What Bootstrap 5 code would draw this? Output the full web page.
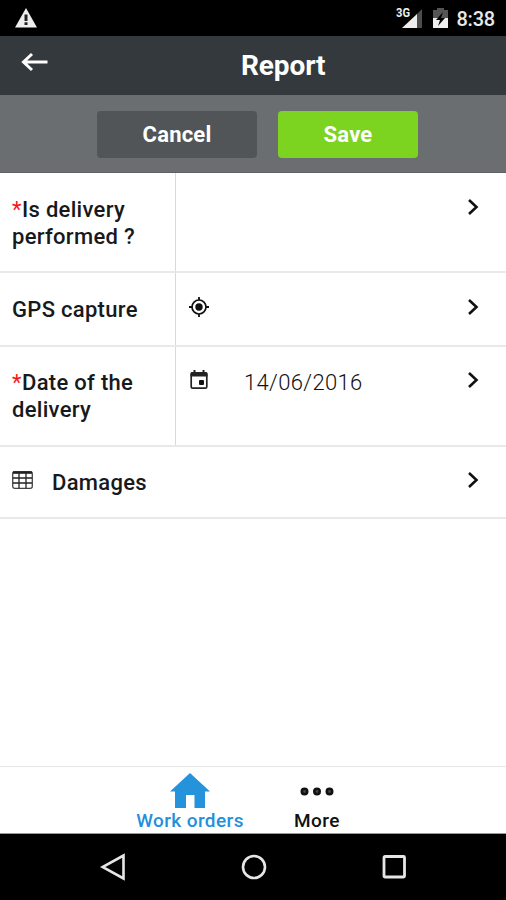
<!DOCTYPE html>
<html lang="en">
<head>
<meta charset="utf-8">
<meta name="viewport" content="width=device-width, initial-scale=1">
<title>Report</title>
<link href="https://cdn.jsdelivr.net/npm/bootstrap@5.3.0/dist/css/bootstrap.min.css" rel="stylesheet">
<style>
  body { font-family: Roboto, "Liberation Sans", sans-serif; color: #18191b; background: #fff; }
  svg { display: block; flex: none; }
  .screen { height: 900px; overflow: hidden; }
  .status-bar { height: 36px; background: #000; color: #e8e8e8; padding: 0 11px 0 15px; }
  .battery { margin-left: 10px; }
  .clock { font-size: 20px; font-weight: 500; line-height: 36px; margin-left: 8px; padding-top: 2px; letter-spacing: -.2px; }
  .title-bar { height: 59px; background: #33393d; padding: 0 0 0 21px; }
  .title-bar h1 { font-size: 28px; font-weight: 700; line-height: 58px; color: #fff; margin: 0 0 0 193px; letter-spacing: -.1px; }
  .title-bar .back { margin-bottom: 8px; }
  .action-bar { height: 78px; background: #6b6e71; border-bottom: 1px solid #5f6264; padding: 16px 0 0 97px; gap: 21px; }
  .action-bar .btn { height: 47px; padding: 0; border: 0; border-radius: 4px; font-size: 22px; font-weight: 700; line-height: 44px; color: #fff; display: block; }
  .action-bar .btn-cancel { width: 160px; background: #515558; letter-spacing: .2px; }
  .action-bar .btn-save { width: 140px; background: #7cd420; letter-spacing: .2px; }
  .field-row { border-bottom: 2px solid #e9e9e9; font-size: 22px; line-height: 27px; }
  .field-label { width: 176px; padding: 23px 8px 0 12px; border-right: 1px solid #d9d9d9; font-weight: 500; letter-spacing: .3px; }
  .req { color: #f51a1a; font-weight: 400; width: 10px; }
  .tall { height: 100px; }
  .mid { height: 74px; }
  .raised { height: 100px; }
  .last-row { height: 72px; }
  .field-value { padding: 23px 27px 0 13px; }
  .last-row .field-value { padding-left: 12px; }
  .raised .field-label, .raised .field-value, .last-row .field-value { padding-top: 22px; }
  .field-row svg { margin-top: 1px; }
  .date { font-weight: 300; letter-spacing: .35px; margin-left: 35px; color: #111; }
  .table-name { font-weight: 500; margin-left: 19px; letter-spacing: .3px; }
  .tab-bar { height: 68px; border-top: 1px solid #e7e7e7; border-bottom: 1px solid #999; padding-left: 135px; }
  .tab-bar a { font-size: 19px; font-weight: 500; line-height: 22px; text-decoration: none; color: #111; letter-spacing: .4px; }
  .tab-bar a.current { color: #2490da; width: 110px; margin-right: 49px; }
  .tab-bar svg { margin-top: 5px; }
  .tab-bar .tab-text { margin-top: 1px; white-space: nowrap; }
  .system-nav { height: 66px; background: #000; padding: 0 99px 0 100px; }
</style>
</head>
<body>
<div class="screen d-flex flex-column">
  <div class="status-bar d-flex align-items-center">
    <svg width="22" height="20" viewBox="0 0 22 20"><path d="M11 0 22 19.500H0z" fill="#eee"/><path d="M9.500 6.500h3v6.500h-3zM9.500 14.300h3v2.700h-3z" fill="#222"/></svg>
    <svg class="ms-auto" width="27" height="22" viewBox="0 0 27 22"><path d="M26 2v19H20V8z" fill="#4c4c4c"/><path d="M21 7v14H6z" fill="#eee"/><text x="0" y="9.500" font-size="12" font-weight="700" fill="#eee" stroke="#000" stroke-width="1.500" paint-order="stroke" textLength="14" lengthAdjust="spacingAndGlyphs">3G</text></svg>
    <svg class="battery" width="15" height="22" viewBox="0 0 15 22"><path d="M0 3h4V1h7v2h4v9H0z" fill="#555"/><path d="M0 11h15v10H0z" fill="#eee"/><path d="M10 5 3 13h4l-2 6 7-8H8z" fill="#000"/></svg>
    <div class="clock">8:38</div>
  </div>
  <header class="title-bar d-flex align-items-center">
    <a href="#" class="back" aria-label="Back"><svg width="27" height="20" viewBox="0 0 27 20"><path d="M26.500 10H2.500M11 2 2.500 10l8.500 8" fill="none" stroke="#fff" stroke-width="3"/></svg></a>
    <h1>Report</h1>
  </header>
  <div class="action-bar d-flex">
    <button type="button" class="btn btn-cancel">Cancel</button>
    <button type="button" class="btn btn-save">Save</button>
  </div>
  <main class="flex-grow-1">
    <div class="field-row tall d-flex">
      <div class="field-label"><div class="d-flex"><span class="req">*</span><span>Is delivery</span></div><div>performed ?</div></div>
      <div class="field-value flex-grow-1 d-flex align-items-start">
        <svg class="ms-auto" width="12" height="20" viewBox="0 0 12 20"><path d="M2 3 9.500 10 2 17" fill="none" stroke="#111" stroke-width="2.600"/></svg>
      </div>
    </div>
    <div class="field-row mid d-flex">
      <div class="field-label">GPS capture</div>
      <div class="field-value flex-grow-1 d-flex align-items-start">
        <svg width="20" height="20" viewBox="0 0 20 20"><circle cx="10" cy="10" r="7" fill="none" stroke="#111" stroke-width="1.700"/><circle cx="10" cy="10" r="3.700" fill="#111"/><path d="M10 0v3M10 17v3M0 10h3M17 10h3" stroke="#111" stroke-width="1.800"/></svg>
        <svg class="ms-auto" width="12" height="20" viewBox="0 0 12 20"><path d="M2 3 9.500 10 2 17" fill="none" stroke="#111" stroke-width="2.600"/></svg>
      </div>
    </div>
    <div class="field-row raised d-flex">
      <div class="field-label"><div class="d-flex"><span class="req">*</span><span>Date of the</span></div><div>delivery</div></div>
      <div class="field-value flex-grow-1 d-flex align-items-start">
        <svg width="20" height="20" viewBox="0 0 20 20"><rect x="2.200" y="3" width="15.600" height="15.200" rx="1.500" fill="none" stroke="#222" stroke-width="1.700"/><path d="M1.500 3.500Q1.500 2 3 2h14q1.500 0 1.500 1.500V6.500h-17zM4.500 0h2v3h-2zM13.500 0h2v3h-2z" fill="#222"/><rect x="10" y="10" width="5" height="5" rx="1" fill="#111"/></svg>
        <div class="date">14/06/2016</div>
        <svg class="ms-auto" width="12" height="20" viewBox="0 0 12 20"><path d="M2 3 9.500 10 2 17" fill="none" stroke="#111" stroke-width="2.600"/></svg>
      </div>
    </div>
    <div class="field-row last-row d-flex">
      <div class="field-value flex-grow-1 d-flex align-items-start">
        <svg width="21" height="20" viewBox="0 0 21 20"><rect x=".7" y="1.700" width="19.600" height="16.600" rx="2" fill="none" stroke="#444" stroke-width="1.300"/><path d="M1 2.600h19" stroke="#222" stroke-width="2.400"/><path d="M1 8h19M1 13h19M7 3v15M14 3v15" stroke="#222" stroke-width="1.300"/></svg>
        <div class="table-name">Damages</div>
        <svg class="ms-auto" width="12" height="20" viewBox="0 0 12 20"><path d="M2 3 9.500 10 2 17" fill="none" stroke="#111" stroke-width="2.600"/></svg>
      </div>
    </div>
  </main>
  <nav class="tab-bar d-flex">
    <a href="#" class="current d-flex flex-column align-items-center">
      <svg width="42" height="37" viewBox="0 0 42 37"><path d="M21 1 41 19.500H36V36H25.500V23H17V36H6V19.500H1z" fill="#2593dc"/></svg>
      <span class="tab-text">Work orders</span>
    </a>
    <a href="#" class="d-flex flex-column align-items-center">
      <svg width="34" height="37" viewBox="0 0 34 37"><g fill="#444" stroke="#111" stroke-width="2.600"><circle cx="4.500" cy="19.500" r="2.700"/><circle cx="17" cy="19.500" r="2.700"/><circle cx="29.500" cy="19.500" r="2.700"/></g></svg>
      <span class="tab-text">More</span>
    </a>
  </nav>
  <div class="system-nav d-flex align-items-center justify-content-between">
    <svg width="26" height="28" viewBox="0 0 26 28"><path d="M23.500 2.500v23L2.500 14z" fill="none" stroke="#e6e6e6" stroke-width="2.600"/></svg>
    <svg width="26" height="26" viewBox="0 0 26 26"><circle cx="13" cy="13" r="11" fill="none" stroke="#e6e6e6" stroke-width="2.600"/></svg>
    <svg width="26" height="26" viewBox="0 0 26 26"><rect x="3" y="2.500" width="20.500" height="20.500" rx="1" fill="none" stroke="#e6e6e6" stroke-width="2.800"/></svg>
  </div>
</div>
<script src="https://cdn.jsdelivr.net/npm/bootstrap@5.3.0/dist/js/bootstrap.bundle.min.js"></script>
</body>
</html>
